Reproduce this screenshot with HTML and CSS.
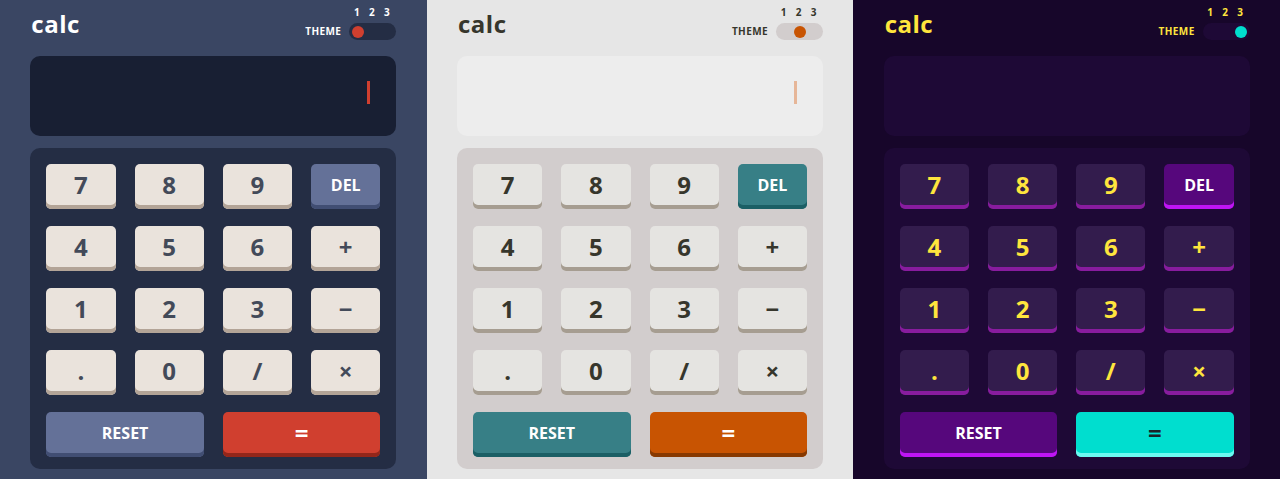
FILE: index.html
```html
<!DOCTYPE html>
<html lang="en">
<head>
<meta charset="utf-8">
<title>calc</title>
<link rel="stylesheet" href="styles.css">
</head>
<body>
<main class="panes">
  <section class="pane theme-1">
    <div class="calc">
      <header class="top">
        <h1 class="logo">calc</h1>
        <div class="theme-switch">
          <span class="theme-label">THEME</span>
          <div class="switch">
            <div class="switch-nums"><span>1</span><span>2</span><span>3</span></div>
            <div class="track pos-1"><span class="knob"></span></div>
          </div>
        </div>
      </header>
      <div class="screen"><span class="cursor"></span></div>
      <div class="keypad">
        <button class="key">7</button><button class="key">8</button><button class="key">9</button><button class="key key-alt key-word">DEL</button>
        <button class="key">4</button><button class="key">5</button><button class="key">6</button><button class="key">+</button>
        <button class="key">1</button><button class="key">2</button><button class="key">3</button><button class="key">−</button>
        <button class="key">.</button><button class="key">0</button><button class="key">/</button><button class="key">×</button>
        <button class="key key-alt key-word key-wide">RESET</button><button class="key key-eq key-wide">=</button>
      </div>
    </div>
  </section>
  <section class="pane theme-2">
    <div class="calc">
      <header class="top">
        <h1 class="logo">calc</h1>
        <div class="theme-switch">
          <span class="theme-label">THEME</span>
          <div class="switch">
            <div class="switch-nums"><span>1</span><span>2</span><span>3</span></div>
            <div class="track pos-2"><span class="knob"></span></div>
          </div>
        </div>
      </header>
      <div class="screen"><span class="cursor"></span></div>
      <div class="keypad">
        <button class="key">7</button><button class="key">8</button><button class="key">9</button><button class="key key-alt key-word">DEL</button>
        <button class="key">4</button><button class="key">5</button><button class="key">6</button><button class="key">+</button>
        <button class="key">1</button><button class="key">2</button><button class="key">3</button><button class="key">−</button>
        <button class="key">.</button><button class="key">0</button><button class="key">/</button><button class="key">×</button>
        <button class="key key-alt key-word key-wide">RESET</button><button class="key key-eq key-wide">=</button>
      </div>
    </div>
  </section>
  <section class="pane theme-3">
    <div class="calc">
      <header class="top">
        <h1 class="logo">calc</h1>
        <div class="theme-switch">
          <span class="theme-label">THEME</span>
          <div class="switch">
            <div class="switch-nums"><span>1</span><span>2</span><span>3</span></div>
            <div class="track pos-3"><span class="knob"></span></div>
          </div>
        </div>
      </header>
      <div class="screen"><span class="cursor"></span></div>
      <div class="keypad">
        <button class="key">7</button><button class="key">8</button><button class="key">9</button><button class="key key-alt key-word">DEL</button>
        <button class="key">4</button><button class="key">5</button><button class="key">6</button><button class="key">+</button>
        <button class="key">1</button><button class="key">2</button><button class="key">3</button><button class="key">−</button>
        <button class="key">.</button><button class="key">0</button><button class="key">/</button><button class="key">×</button>
        <button class="key key-alt key-word key-wide">RESET</button><button class="key key-eq key-wide">=</button>
      </div>
    </div>
  </section>
</main>
</body>
</html>
```
FILE: styles.css
```css
* { box-sizing: border-box; }

html, body {
  margin: 0;
  padding: 0;
  height: 479px;
  overflow: hidden;
}

body {
  font-family: "Open Sans", "Noto Sans", "Liberation Sans", sans-serif;
}

.panes {
  display: flex;
  height: 479px;
}

.theme-1 {
  --bg: #3a4663;
  --pad: #242d44;
  --screen: #181f33;
  --text: #ffffff;
  --key: #eae3dc;
  --key-shadow: #b3a497;
  --key-text: #434a59;
  --alt: #647198;
  --alt-shadow: #414e73;
  --alt-text: #ffffff;
  --eq: #d03f2f;
  --eq-shadow: #93261a;
  --eq-text: #ffffff;
  --knob: #d03f2f;
  --cursor: #d03f2f;
}

.theme-2 {
  --bg: #e6e6e6;
  --pad: #d2cdcd;
  --screen: #ededed;
  --text: #36362c;
  --key: #e5e4e1;
  --key-shadow: #a69d91;
  --key-text: #36362c;
  --alt: #377f86;
  --alt-shadow: #1b5f65;
  --alt-text: #ffffff;
  --eq: #c85402;
  --eq-shadow: #873901;
  --eq-text: #ffffff;
  --knob: #c85402;
  --cursor: #e6b698;
}

.theme-3 {
  --bg: #17062a;
  --pad: #1e0936;
  --screen: #1e0936;
  --text: #ffe53d;
  --key: #331c4d;
  --key-shadow: #881c9e;
  --key-text: #ffe53d;
  --alt: #56077c;
  --alt-shadow: #be15f4;
  --alt-text: #ffffff;
  --eq: #00decf;
  --eq-shadow: #6cf9f1;
  --eq-text: #1a2327;
  --knob: #00decf;
  --cursor: transparent;
}

.pane {
  flex: 1 1 0;
  min-width: 0;
  background: var(--bg);
  color: var(--text);
  padding-top: 7px;
}

.calc {
  width: 366px;
  margin: 0 auto;
}

.top {
  display: flex;
  justify-content: space-between;
  align-items: flex-end;
  padding: 0 0 0 1px;
  margin-bottom: 16px;
}

.logo {
  margin: 0 0 4px;
  font-size: 24px;
  line-height: 24px;
  font-weight: 700;
  letter-spacing: 0.5px;
}

.theme-switch {
  display: flex;
  align-items: flex-end;
  gap: 8px;
}

.theme-label {
  font-size: 10px;
  line-height: 17px;
  font-weight: 700;
  letter-spacing: 0.4px;
}

.switch {
  display: flex;
  flex-direction: column;
  gap: 5px;
  width: 47px;
}

.switch-nums {
  display: grid;
  grid-template-columns: repeat(3, 1fr);
  padding-right: 2px;
  font-size: 10px;
  line-height: 11px;
  font-weight: 700;
  text-align: center;
}

.track {
  height: 17px;
  border-radius: 9px;
  background: var(--pad);
  padding: 0 3px;
  display: flex;
  align-items: center;
}

.knob {
  width: 12px;
  height: 12px;
  border-radius: 50%;
  background: var(--knob);
}

.pos-1 { justify-content: flex-start; }
.pos-2 { justify-content: center; }
.pos-3 { justify-content: flex-end; }

.screen {
  height: 80px;
  border-radius: 10px;
  background: var(--screen);
  display: flex;
  justify-content: flex-end;
  align-items: center;
  padding-right: 26px;
  margin-bottom: 12px;
}

.cursor {
  width: 3px;
  height: 23px;
  background: var(--cursor);
  margin-bottom: 7px;
}

.keypad {
  background: var(--pad);
  border-radius: 10px;
  padding: 16px 16px 12px;
  display: grid;
  grid-template-columns: repeat(4, 1fr);
  column-gap: 19px;
  row-gap: 17px;
}

.key {
  height: 45px;
  border: 0;
  border-radius: 5px;
  background: var(--key);
  box-shadow: inset 0 -4px 0 var(--key-shadow);
  color: var(--key-text);
  font-family: inherit;
  font-size: 24px;
  font-weight: 700;
  line-height: 1;
  padding: 0 0 4px;
  display: flex;
  align-items: center;
  justify-content: center;
}

.key-word {
  font-size: 16px;
}

.key-alt {
  background: var(--alt);
  box-shadow: inset 0 -4px 0 var(--alt-shadow);
  color: var(--alt-text);
}

.key-eq {
  background: var(--eq);
  box-shadow: inset 0 -4px 0 var(--eq-shadow);
  color: var(--eq-text);
}

.key-wide {
  grid-column: span 2;
}
```
